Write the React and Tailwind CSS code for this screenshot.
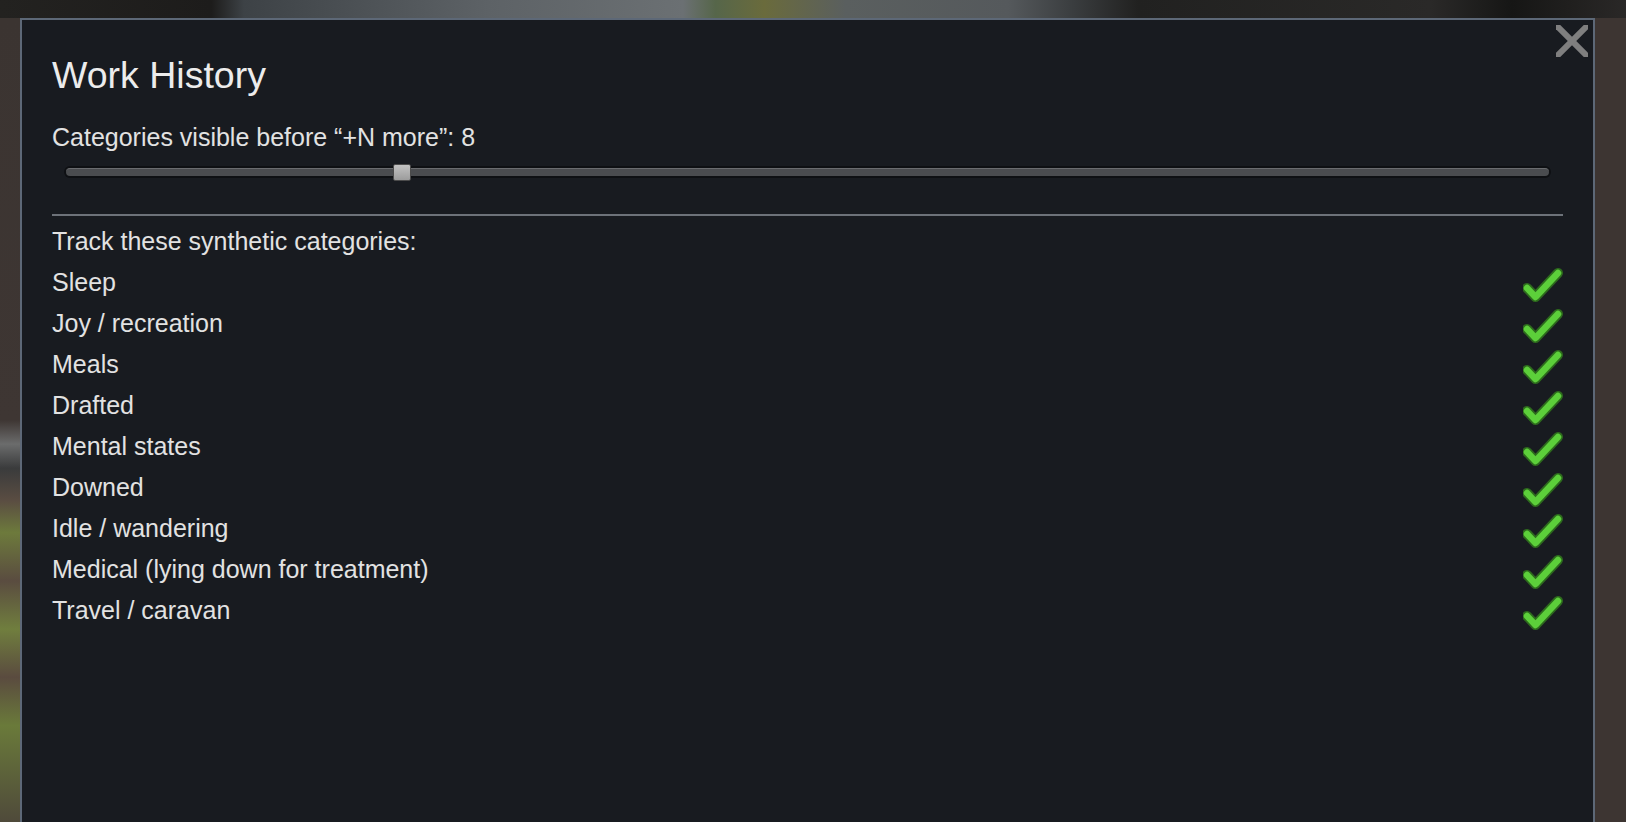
const categories = [
  "Sleep",
  "Joy / recreation",
  "Meals",
  "Drafted",
  "Mental states",
  "Downed",
  "Idle / wandering",
  "Medical (lying down for treatment)",
  "Travel / caravan",
];

function Check() {
  return (
    <svg width="40" height="36" viewBox="0 0 40 36" className="mt-[5px] shrink-0">
      <polyline points="4,21 12.5,30 35,6" fill="none" stroke="#2d6a1d" strokeWidth="10" strokeLinecap="round" strokeLinejoin="round" />
      <polyline points="4,21 12.5,30 35,6" fill="none" stroke="#5ccf3a" strokeWidth="6.5" strokeLinecap="round" strokeLinejoin="round" />
    </svg>
  );
}

function CloseX() {
  return (
    <svg width="32" height="32" viewBox="0 0 32 32" className="absolute top-[5px] right-[5px]">
      <line x1="-1" y1="-1" x2="33" y2="33" stroke="#7f7f7f" strokeWidth="6" />
      <line x1="33" y1="-1" x2="-1" y2="33" stroke="#7f7f7f" strokeWidth="6" />
    </svg>
  );
}

function Slider({ value, min, max }) {
  const pct = ((value - min) / (max - min)) * 100;
  return (
    <div className="relative mx-[12px] h-[17px] flex items-center">
      <div className="h-[12px] w-full rounded-full bg-[#0e1013] p-[2px]">
        <div className="h-full w-full rounded-full bg-[#4a4c4f] border-t border-[#6a6c6f]" />
      </div>
      <div
        className="absolute top-0 h-[17px] w-[18px] rounded-[2px] border border-[#4b4b4b] bg-[linear-gradient(180deg,#c2c2c2,#9c9c9c)]"
        style={{ left: `calc(${pct}% - ${(pct / 100) * 18}px)` }}
      />
    </div>
  );
}

export default function App() {
  return (
    <div className="h-[822px] w-full overflow-hidden flex flex-col bg-[#3c3431]" style={{ fontFamily: '"Liberation Sans", Arial, sans-serif' }}>
      <div className="h-[18px] shrink-0 bg-[linear-gradient(90deg,#232220_0%,#1d1c1b_13%,#3d4246_15%,#5d6266_30%,#6b7073_42%,#56664a_44%,#6a6b3c_47%,#5a5f5f_52%,#55595c_62%,#3a3d3f_66%,#212120_70%,#2a2928_88%,#161615_93%,#2a2827_100%)]" />
      <div className="flex flex-1 min-h-0">
        <div className="w-[20px] shrink-0 bg-[linear-gradient(180deg,#3b3431_0%,#3e3633_50%,#6b6c6c_53%,#3a3b3c_56%,#5a4d42_60%,#6d7a3c_64%,#5a4c40_70%,#707e3e_76%,#5a4b3f_82%,#6a7a3a_88%,#4f4a3a_100%)]" />
        <div className="relative w-[1575px] shrink-0 border-2 border-b-0 border-[#5d6877] bg-[#181b20] px-[30px] pt-[37px] text-[#e2e2e2]">
          <CloseX />
          <h1 className="text-[37.5px] leading-none text-[#ececec]">Work History</h1>
          <div className="mt-[30px] text-[25px] leading-none">Categories visible before “+N more”: 8</div>
          <div className="mt-[14px]">
            <Slider value={8} min={0} max={35.7} />
          </div>
          <div className="mt-[33px] h-[2px] bg-[#6d7279]" />
          <div className="mt-[5px] h-[41px] flex items-center text-[25px] leading-none">Track these synthetic categories:</div>
          {categories.map((c) => (
            <div key={c} className="h-[41px] flex items-center justify-between text-[25px] leading-none">
              <span>{c}</span>
              <Check />
            </div>
          ))}
        </div>
        <div className="flex-1 bg-[#3d3532]" />
      </div>
    </div>
  );
}
